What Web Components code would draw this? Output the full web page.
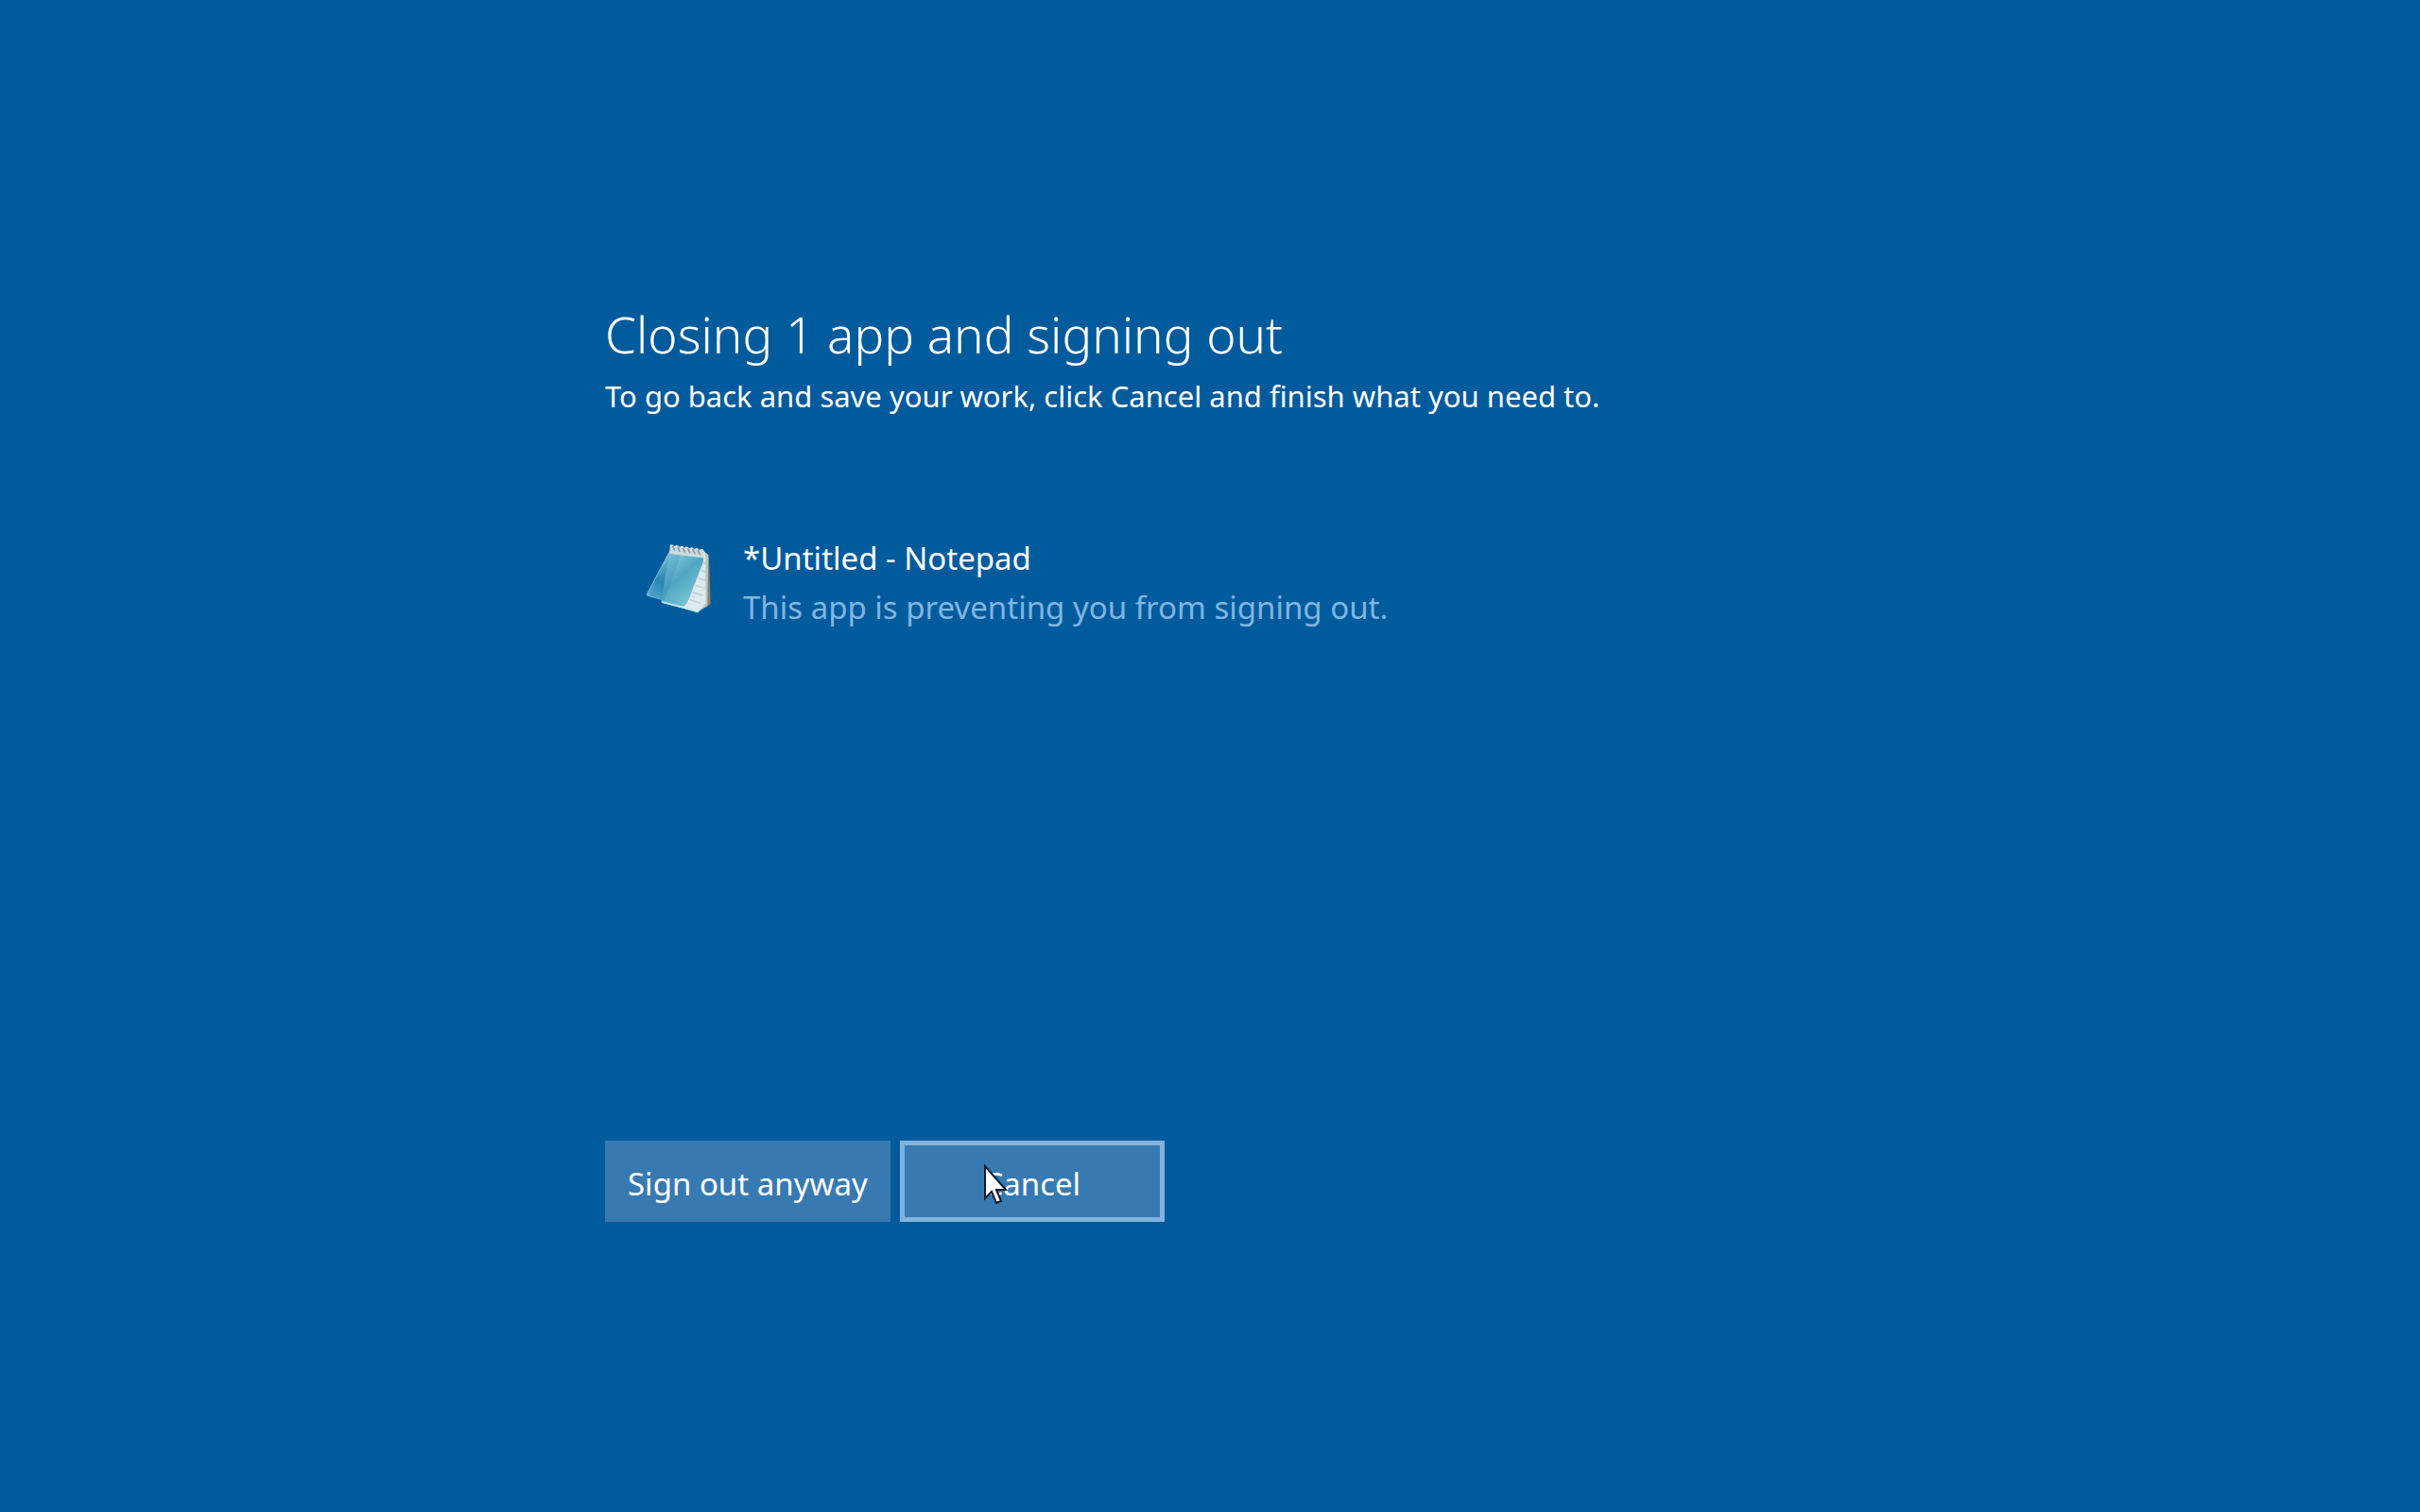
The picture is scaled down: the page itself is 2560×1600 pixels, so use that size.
<!DOCTYPE html>
<html lang="en">
<head>
<meta charset="utf-8">
<title>Signing out</title>
<style>
    body{
        margin: 0;
        background-color: #005b9d;
        color: #fff;
        font-family: "Noto Sans", sans-serif;
    }
</style>
</head>
<body>
<sign-out-screen>
    <span slot="title">Closing 1 app and signing out</span>
    <span slot="hint">To go back and save your work, click Cancel and finish what you need to.</span>
    <blocking-app>
        <notepad-icon slot="icon"></notepad-icon>
        <span slot="name">*Untitled - Notepad</span>
        <span slot="reason">This app is preventing you from signing out.</span>
    </blocking-app>
    <shell-button slot="actions">Sign out anyway</shell-button>
    <shell-button slot="actions" focused>Cancel<mouse-pointer slot="pointer"></mouse-pointer></shell-button>
</sign-out-screen>

<script>
const templateScreen = document.createElement("template");
templateScreen.innerHTML = `
    <style>
        :host{
            display: block;
            min-height: 100vh;
            box-sizing: border-box;
            padding: 315px 10% 0 25%;
        }
        h1{
            margin: 0;
            font-size: 53px;
            font-weight: 300;
            line-height: 78px;
        }
        p{
            margin: 0;
            font-size: 31px;
            line-height: 52px;
        }
        .apps{
            min-height: 762px;
            box-sizing: border-box;
            padding: 120px 0 0 44px;
        }
        .actions{
            display: flex;
            gap: 10px;
        }
    </style>

    <main>
        <h1><slot name="title"></slot></h1>
        <p><slot name="hint"></slot></p>
        <div class="apps"><slot></slot></div>
        <div class="actions"><slot name="actions"></slot></div>
    </main>
`;

class SignOutScreen extends HTMLElement{
    constructor(){
        super();
        this.attachShadow({mode: "open"});
        this.shadowRoot.appendChild(templateScreen.content.cloneNode(true));
    };
};

const templateApp = document.createElement("template");
templateApp.innerHTML = `
    <style>
        :host{
            display: flex;
            align-items: flex-start;
            gap: 32px;
            font-size: 33px;
            line-height: 52px;
        }
        .reason{
            color: #80b5e3;
        }
    </style>

    <slot name="icon"></slot>
    <div>
        <div><slot name="name"></slot></div>
        <div class="reason"><slot name="reason"></slot></div>
    </div>
`;

class BlockingApp extends HTMLElement{
    constructor(){
        super();
        this.attachShadow({mode: "open"});
        this.shadowRoot.appendChild(templateApp.content.cloneNode(true));
    };
};

const templateNotepad = document.createElement("template");
templateNotepad.innerHTML = `
    <style>
        :host{
            display: block;
            flex: none;
            padding-top: 10px;
        }
        svg{
            display: block;
        }
    </style>

    <svg width="70" height="75" viewBox="42 48 210 225" aria-hidden="true">
        <defs>
            <linearGradient id="cover" x1="0" y1="0" x2="0.7" y2="1">
                <stop offset="0" stop-color="#a3dbe4"/>
                <stop offset="0.5" stop-color="#4fa6c2"/>
                <stop offset="1" stop-color="#7cc9d8"/>
            </linearGradient>
            <linearGradient id="flap" x1="0.6" y1="0" x2="0.3" y2="1">
                <stop offset="0" stop-color="#8fd0df"/>
                <stop offset="0.6" stop-color="#2b86b5"/>
                <stop offset="1" stop-color="#5fb2d2"/>
            </linearGradient>
        </defs>
        <path d="M228 78 L240 92 L245 240 L232 250 L206 262 Z" fill="#8c8468"/>
        <path d="M222 72 L238 84 L235 246 L204 266 Z" fill="#b9c6c6"/>
        <path d="M118 62 L228 76 L230 236 L206 267 L90 236 Z" fill="#dce9ed"/>
        <path d="M222 110 L230 114 M218 134 L230 140 M208 158 L228 166 M198 182 L226 190 M188 204 L222 213 M178 226 L214 238" stroke="#bccdd4" stroke-width="4"/>
        <path d="M116 72 L132 88 L98 228 L44 214 Q42 208 46 204 L100 102 Z" fill="url(#flap)" stroke="#79bdd9" stroke-width="3"/>
        <path d="M114 80 L222 94 Q224 100 220 112 L184 204 Q174 236 162 246 Q158 250 150 248 L88 234 Z" fill="url(#cover)"/>
        <path d="M114 80 L150 86 L98 228 L52 216 L104 104 Z" fill="#1f7fb0" opacity="0.25"/>
        <path d="M90 234 L156 251 L206 266" stroke="#c4eaf0" stroke-width="5" fill="none"/>
        <path d="M116 54 L224 70 L224 92 L115 80 Z" fill="#cfdadd"/>
        <path d="M124 56 L132 72 M140 59 L148 75 M156 61 L164 77 M172 63 L180 79 M188 66 L196 82 M204 68 L212 84" stroke="#8299a3" stroke-width="5"/>
        <path d="M118 54 L224 69" stroke="#edf5f5" stroke-width="4" stroke-dasharray="9 7"/>
    </svg>
`;

class NotepadIcon extends HTMLElement{
    constructor(){
        super();
        this.attachShadow({mode: "open"});
        this.shadowRoot.appendChild(templateNotepad.content.cloneNode(true));
    };
};

const templateButton = document.createElement("template");
templateButton.innerHTML = `
    <style>
        :host{
            display: block;
            position: relative;
        }
        button{
            display: block;
            min-width: 280px;
            height: 86px;
            padding: 4px 19px 0;
            border: 5px solid #377ab1;
            border-radius: 0;
            background-color: #377ab1;
            color: #fff;
            font: inherit;
            font-size: 33px;
        }
        :host([focused]) button{
            border-color: #80b3dc;
        }
        /* sits over the label */
        ::slotted(mouse-pointer){
            position: absolute;
            left: 88px;
            top: 25px;
        }
    </style>

    <button type="button"><slot></slot></button>
    <slot name="pointer"></slot>
`;

class ShellButton extends HTMLElement{
    constructor(){
        super();
        this.attachShadow({mode: "open"});
        this.shadowRoot.appendChild(templateButton.content.cloneNode(true));
    };
};

const templatePointer = document.createElement("template");
templatePointer.innerHTML = `
    <style>
        :host{
            display: block;
            pointer-events: none;
        }
        svg{
            display: block;
        }
    </style>

    <svg width="26" height="44" viewBox="0 0 26 44" aria-hidden="true">
        <path d="M2 2 L2 36 L9 29 L14 41 L19 39 L14 27 L24 27 Z" fill="#fff" stroke="#0b1a2b" stroke-width="2"/>
    </svg>
`;

class MousePointer extends HTMLElement{
    constructor(){
        super();
        this.attachShadow({mode: "open"});
        this.shadowRoot.appendChild(templatePointer.content.cloneNode(true));
    };
};

customElements.define("sign-out-screen", SignOutScreen);
customElements.define("blocking-app", BlockingApp);
customElements.define("notepad-icon", NotepadIcon);
customElements.define("shell-button", ShellButton);
customElements.define("mouse-pointer", MousePointer);
</script>
</body>
</html>
